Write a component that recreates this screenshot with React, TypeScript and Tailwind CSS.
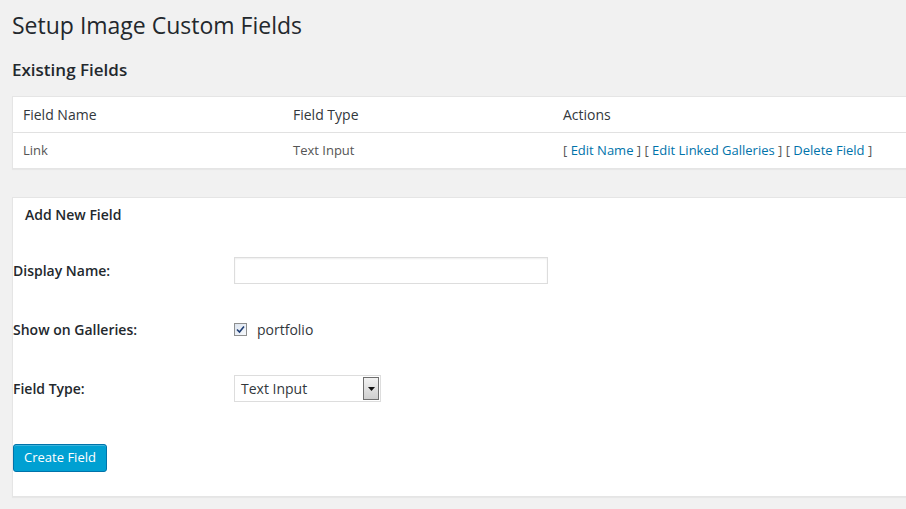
import React from 'react'

const font = { fontFamily: '"Open Sans", "Liberation Sans", sans-serif' }

function Checkbox() {
  return (
    <span className="flex h-[13px] w-[13px] items-center justify-center border border-[#8e8f8f] bg-gradient-to-br from-[#dce4ef] to-[#f7f9fc]">
      <svg width="9" height="9" viewBox="0 0 9 9">
        <path d="M1 4.5 L3.5 7 L8 1.5" fill="none" stroke="#1e3d73" strokeWidth="1.6" />
      </svg>
    </span>
  )
}

function FakeSelect() {
  return (
    <div className="flex h-[27px] w-[147px] items-center border border-[#ddd] bg-white pl-[6px] text-[14px] text-[#32373c]">
      <span className="flex-1">Text Input</span>
      <span className="mr-[1px] flex h-[23px] w-[16px] items-center justify-center border border-[#6f6f6f] bg-gradient-to-b from-[#f2f2f2] to-[#cfcfcf]">
        <svg width="7" height="4" viewBox="0 0 7 4"><path d="M0 0 H7 L3.5 4 Z" fill="#111" /></svg>
      </span>
    </div>
  )
}

export default function App() {
  const rows = [{ name: 'Link', type: 'Text Input' }]

  return (
    <div className="min-h-[509px] w-[906px] overflow-hidden bg-[#f1f1f1] text-[13px] text-[#444]" style={font}>
      <div className="pl-3">
        <h1 className="pt-[11px] text-[23px] leading-[29px] font-normal text-[#23282d]">Setup Image Custom Fields</h1>
        <h2 className="mt-[19px] text-[17px] leading-[22px] font-semibold text-[#23282d]">Existing Fields</h2>

        <div className="mt-[15px] w-[930px] border border-[#e5e5e5] bg-white shadow-[0_1px_1px_rgba(0,0,0,0.04)]">
          <div className="flex h-[36px] items-center border-b border-[#e1e1e1] text-[14px] text-[#32373c]">
            <div className="w-[270px] pl-[10px]">Field Name</div>
            <div className="w-[270px] pl-[10px]">Field Type</div>
            <div className="flex-1 pl-[10px]">Actions</div>
          </div>
          {rows.map(r => (
            <div key={r.name} className="flex h-[35px] items-center text-[13px] text-[#555]">
              <div className="w-[270px] pl-[10px]">{r.name}</div>
              <div className="w-[270px] pl-[10px]">{r.type}</div>
              <div className="flex-1 pl-[10px]">
                [ <a className="text-[#0073aa]">Edit Name</a> ] [ <a className="text-[#0073aa]">Edit Linked Galleries</a> ] [ <a className="text-[#0073aa]">Delete Field</a> ]
              </div>
            </div>
          ))}
        </div>

        <div className="mt-[28px] w-[930px] border border-[#e5e5e5] bg-white pb-[24px] shadow-[0_1px_1px_rgba(0,0,0,0.04)]">
          <h3 className="pl-3 pt-[7px] text-[14px] leading-[20px] font-semibold text-[#23282d]">Add New Field</h3>

          <div className="mt-[32px] flex h-[27px] items-center">
            <label className="w-[221px] text-[14px] font-semibold text-[#23282d]">Display Name:</label>
            <input className="h-[27px] w-[314px] border border-[#ddd] bg-white px-2 shadow-[inset_0_1px_2px_rgba(0,0,0,0.07)] outline-none" />
          </div>

          <div className="mt-[32px] flex h-[27px] items-center">
            <label className="w-[221px] text-[14px] font-semibold text-[#23282d]">Show on Galleries:</label>
            <Checkbox />
            <span className="ml-[10px] text-[14px] text-[#32373c]">portfolio</span>
          </div>

          <div className="mt-[32px] flex h-[27px] items-center">
            <label className="w-[221px] text-[14px] font-semibold text-[#23282d]">Field Type:</label>
            <FakeSelect />
          </div>

          <button className="mt-[42px] h-[28px] w-[94px] rounded-[3px] border border-[#0073aa] bg-[#00a0d2] text-[13px] text-white shadow-[inset_0_1px_0_rgba(120,200,230,0.5)]">
            Create Field
          </button>
        </div>
      </div>
    </div>
  )
}
